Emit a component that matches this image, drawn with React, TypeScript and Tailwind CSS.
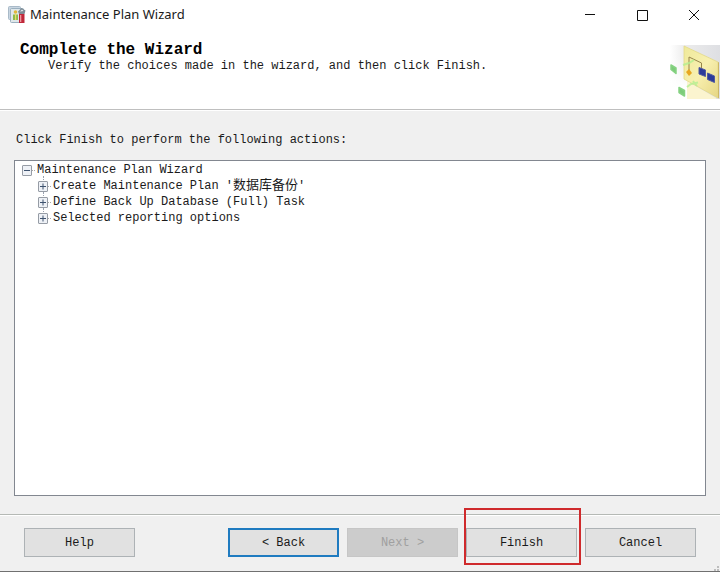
import { useState } from 'react';
import clsx from 'clsx';

interface TreeItem {
  key: string;
  text: string;
  /** Chinese plan name shown in quotes after the text */
  planName?: string;
}

const actions: TreeItem[] = [
  { key: 'create', text: 'Create Maintenance Plan ', planName: '数据库备份' },
  { key: 'backup', text: 'Define Back Up Database (Full) Task' },
  { key: 'report', text: 'Selected reporting options' },
];

function AppIcon() {
  return (
    <svg width="18" height="18" viewBox="0 0 18 18" aria-hidden="true">
      <rect x="0.500" y="0.500" width="12" height="13" rx="1" fill="#c9d6e2" stroke="#a9bac8" />
      <rect x="2.500" y="2.500" width="13" height="14" rx="1" fill="#dfe7ea" stroke="#9bb0bf" />
      <circle cx="7.500" cy="6" r="1.800" fill="#e0b93a" />
      <path d="M5 8.500h5V14H5z" fill="#8fba4c" />
      <path d="M7 8h1.200v6H7z" fill="#e9dc6a" />
      <path d="M11 8h5.500v9H11z" fill="#c0283a" />
      <path d="M12 9h1.300v7H12z" fill="#eb9aa0" />
      <path d="M10 5.500 13.500 2 17.500 4.500l-1 3.500H11z" fill="#7d8b95" />
      <path d="M12 5.500 14 3.500l1.500 1.500z" fill="#e8edf0" />
    </svg>
  );
}

function WizardArt() {
  return (
    <svg width="50" height="54" viewBox="0 0 50 54" aria-hidden="true">
      <defs>
        <linearGradient id="shade" x1="0" x2="1" y1="0" y2="0">
          <stop offset="0" stopColor="#ffffff" />
          <stop offset="0.3" stopColor="#ececec" />
          <stop offset="1" stopColor="#dedfe3" />
        </linearGradient>
        <linearGradient id="board" x1="0" x2="1" y1="0" y2="1">
          <stop offset="0" stopColor="#efe99a" />
          <stop offset="0.5" stopColor="#f8f0b0" />
          <stop offset="1" stopColor="#e6d683" />
        </linearGradient>
        <linearGradient id="fade" x1="0" x2="0" y1="0" y2="1">
          <stop offset="0.2" stopColor="#ffffff" stopOpacity="0" />
          <stop offset="0.8" stopColor="#ffffff" />
        </linearGradient>
      </defs>
      <rect width="50" height="54" fill="url(#shade)" />
      <rect width="20" height="54" fill="url(#fade)" />
      <path d="M17 36 46 53v1H17z" fill="#fbf4cf" />
      <path d="M14 1 48 17v36L14 34z" fill="url(#board)" stroke="#e3d988" strokeWidth="0.8" />
      <path d="M48 17l1 .5v35.500l-1 .5z" fill="#cdb866" />
      <path d="M19 27V12l12.500 6v6" fill="none" stroke="#97854b" strokeWidth="1" />
      <path d="m19 24 3 4-3 3-3-4z" fill="#e8a720" />
      <path d="m29 22.500 6.500 2.500v6.500L29 29zM37.500 28 44.500 31v6.500l-7-3z" fill="#2c3a9a" stroke="#515aa0" strokeWidth="1" strokeLinejoin="round" />
      <path d="m13 20 6-2 5-3M17 42l4-3 7-1.500M23 36l4 5" fill="none" stroke="#b3ef91" strokeWidth="2" opacity="0.8" />
      <path d="m1 20 5 3v5.500l-5-4zM9 42.500l5.500 3V51L9 47.500z" fill="#7ccb7a" stroke="#86d282" strokeWidth="1.500" strokeLinejoin="round" />
    </svg>
  );
}

interface ExpanderProps {
  open: boolean;
  label: string;
  onToggle: () => void;
}

function Expander({ open, label, onToggle }: ExpanderProps) {
  return (
    <button type="button" aria-label={label} aria-expanded={open} onClick={onToggle} className="flex flex-none">
      <svg width="16" height="16" viewBox="0 0 16 16" aria-hidden="true">
        <path d="M11 8.500h4" stroke="#a8a8a8" strokeDasharray="1 1" />
        <rect x="1.500" y="3.500" width="9" height="10" rx="0.500" fill="#eef1f6" stroke="#969ca5" />
        <path d="M3 8.500h6" stroke="#3e536f" />
        {!open && <path d="M6 5.500v6" stroke="#3e536f" />}
      </svg>
    </button>
  );
}

function ActionTree() {
  const [rootOpen, setRootOpen] = useState(true);
  const [openItems, setOpenItems] = useState<Record<string, boolean>>({});

  return (
    <ul className="leading-4">
      <li>
        <div className="flex items-center">
          <Expander open={rootOpen} label="Toggle plan" onToggle={() => setRootOpen(!rootOpen)} />
          <span>Maintenance Plan Wizard</span>
        </div>
        {rootOpen && (
          <ul className="ml-4">
            {actions.map((item) => (
              <li key={item.key} className="relative flex h-4 items-center">
                <span className="absolute -top-0.5 left-1.5 h-1 border-l border-dotted border-gray-400" />
                <Expander
                  open={!!openItems[item.key]}
                  label={`Toggle ${item.key}`}
                  onToggle={() => setOpenItems((previous) => ({ ...previous, [item.key]: !previous[item.key] }))}
                />
                <span className="whitespace-pre">
                  {item.text}
                  {item.planName && <>'<span className="text-[13px]">{item.planName}</span>'</>}
                </span>
              </li>
            ))}
          </ul>
        )}
      </li>
    </ul>
  );
}

interface WizardButtonProps {
  label: string;
  isDefault?: boolean;
  disabled?: boolean;
}

function WizardButton({ label, isDefault, disabled }: WizardButtonProps) {
  return (
    <button
      type="button"
      disabled={disabled}
      className={clsx(
        'h-[29px] w-[111px] whitespace-pre',
        isDefault && 'border-2 border-[#1f7bc0] bg-[#e1e1e1]',
        disabled && 'border border-[#c6c6c6] bg-[#cccccc] text-[#a0a0a0]',
        !isDefault && !disabled && 'border border-[#adb2b5] bg-[#e1e1e1]',
      )}
    >
      {label}
    </button>
  );
}

export default function App() {
  return (
    <div className="relative flex min-h-screen flex-col border-b border-[#707070] bg-[#f0f0f0] font-['Liberation_Mono','Noto_Sans_CJK_SC',monospace] text-[12px] text-[#1a1a1a]">
      <header className="flex h-[30px] items-center bg-white pl-2">
        <AppIcon />
        <h1 className="ml-1 flex-1 font-['Noto_Sans',sans-serif] text-[13px]">Maintenance Plan Wizard</h1>
        <div className="flex h-full">
          <button type="button" aria-label="Minimize" className="flex w-[52px] items-center justify-center">
            <svg width="12" height="12" viewBox="0 0 12 12"><path d="M1 5.500h10" stroke="#111" /></svg>
          </button>
          <button type="button" aria-label="Maximize" className="flex w-[52px] items-center justify-center">
            <svg width="12" height="12" viewBox="0 0 12 12"><path d="M1.500 1.500h10v10h-10z" fill="none" stroke="#111" /></svg>
          </button>
          <button type="button" aria-label="Close" className="flex w-[52px] items-center justify-center">
            <svg width="12" height="12" viewBox="0 0 12 12"><path d="m1 1 10 10M11 1 1 11" stroke="#111" /></svg>
          </button>
        </div>
      </header>

      <section className="flex items-start justify-between border-b border-[#bfbfbf] bg-white pb-2.5 pl-5 pt-3">
        <div>
          <h2 className="text-[16px] font-bold leading-4 text-black">Complete the Wizard</h2>
          <p className="ml-7 leading-4">Verify the choices made in the wizard, and then click Finish.</p>
        </div>
        <div className="pt-[3px]">
          <WizardArt />
        </div>
      </section>

      <main className="flex flex-1 flex-col border-t border-white px-4 pb-[18px] pt-[21px]">
        <p className="mb-3 leading-4">Click Finish to perform the following actions:</p>
        <div className="-mx-0.5 flex-1 border border-[#828790] bg-white pl-1.5 pt-px">
          <ActionTree />
        </div>
      </main>

      <footer className="border-t border-[#b5b9b5]">
        <div className="flex items-center justify-between border-t border-white px-6 pb-3.5 pt-3">
          <WizardButton label="Help" />
          <div className="flex gap-2">
            <WizardButton label="< Back" isDefault />
            <WizardButton label="Next >" disabled />
            <div className="relative">
              <WizardButton label="Finish" />
              <span className="pointer-events-none absolute -bottom-2 -left-0.5 -right-1 -top-5 border-2 border-[#cf2a2c]" />
            </div>
            <WizardButton label="Cancel" />
          </div>
        </div>
      </footer>

      {/* resize grip */}
      <svg width="8" height="5" viewBox="0 0 8 5" className="absolute bottom-0 right-0" aria-hidden="true">
        <path d="M5 0h2v2H5zM5 3h2v2H5zM2 3h2v2H2z" fill="#bdbdbd" />
      </svg>
    </div>
  );
}
